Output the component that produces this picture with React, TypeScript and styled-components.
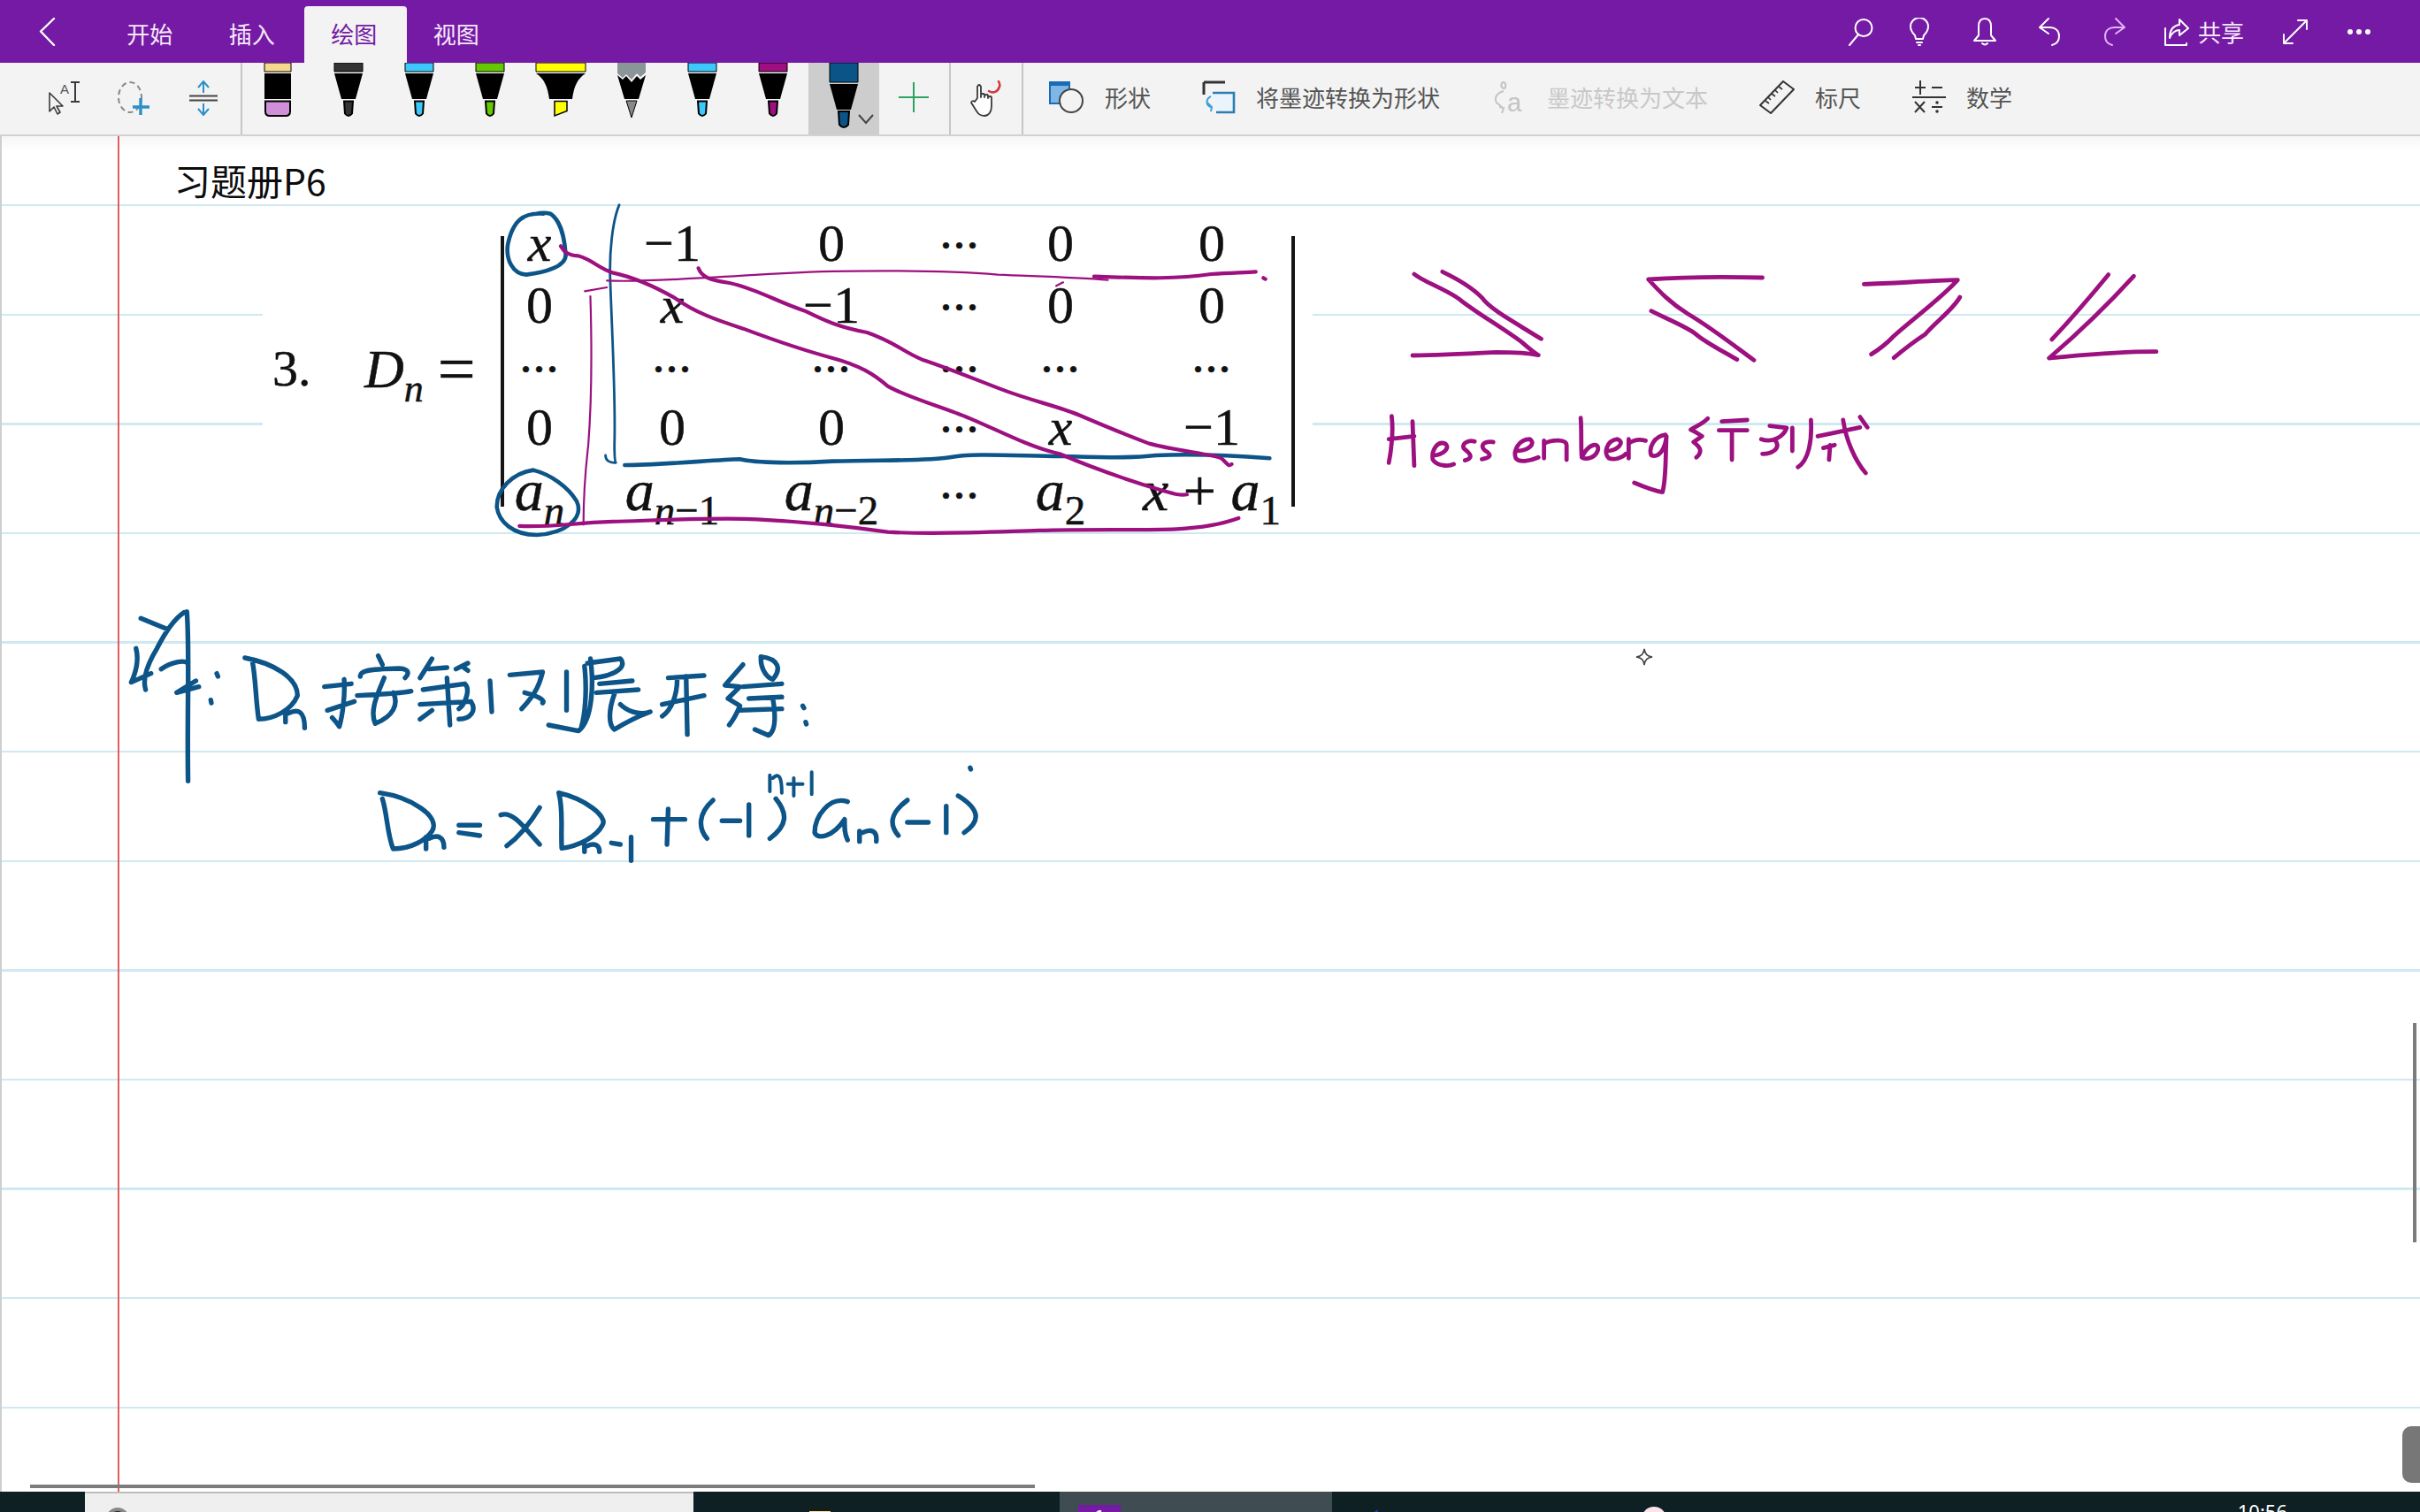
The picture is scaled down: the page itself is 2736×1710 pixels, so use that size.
import React from "react";
import styled, { createGlobalStyle } from "styled-components";

const Global = createGlobalStyle`
  html, body { margin: 0; padding: 0; height: 100%; overflow: hidden; background: #fff; }
  body { font-family: "Noto Sans CJK SC", "Noto Sans", sans-serif; }
`;

const Page = styled.div`
  width: 2736px; height: 1710px; display: flex; flex-direction: column; overflow: hidden;
`;

/* ---------- Title bar ---------- */
const TitleBar = styled.header`
  height: 71px; flex: none; background: #751aa5; display: flex; align-items: stretch; color: #fff;
`;
const BackButton = styled.div`
  width: 113px; display: flex; align-items: center; padding-left: 43px; box-sizing: border-box;
`;
const Tab = styled.div<{ $active?: boolean }>`
  width: 115.5px; margin-top: 7px; display: flex; align-items: center; justify-content: center;
  font-size: 26px; padding: 0 3px 4px 0; box-sizing: border-box; border-radius: 4px 4px 0 0;
  background: ${(p) => (p.$active ? "#f3f3f3" : "transparent")};
  color: ${(p) => (p.$active ? "#751aa5" : "#f4e9f9")};
`;
const TitleRight = styled.div`
  margin-left: auto; padding-right: 55px; display: flex; align-items: center;
`;
const TitleIcon = styled.div<{ $w: number }>`
  width: ${(p) => p.$w}px; height: 71px; display: flex; align-items: center; justify-content: center;
`;
const ShareButton = styled.div`
  width: 106px; display: flex; align-items: center; justify-content: flex-end; gap: 9px; font-size: 26px; color: #f4e9f9;
`;

/* ---------- Ribbon ---------- */
const Ribbon = styled.div`
  height: 81px; flex: none; background: #f3f3f3; border-bottom: 2px solid #d2d2d2; display: flex; align-items: stretch;
`;
const ToolGroup = styled.div`
  width: 274px; flex: none; box-sizing: border-box; border-right: 2px solid #c6c6c6;
  display: flex; align-items: center; padding: 0 0 2px 54px; gap: 40px;
`;
const PenRow = styled.div`
  display: flex; flex: none; width: 640px;
`;
const PenSlot = styled.div<{ $selected?: boolean }>`
  width: 80px; flex: none; position: relative; display: flex; justify-content: center;
  background: ${(p) => (p.$selected ? "#cdcdcd" : "transparent")};
`;
const PenChevron = styled.svg`
  position: absolute; left: 56px; top: 58px;
`;
const PlusSlot = styled.div`
  width: 81px; flex: none; box-sizing: border-box; border-right: 2px solid #c6c6c6; padding: 0 0 3px 22px;
  display: flex; align-items: center;
`;
const TouchSlot = styled.div`
  width: 82px; flex: none; box-sizing: border-box; border-right: 2px solid #c6c6c6;
  display: flex; align-items: center; justify-content: center;
`;
const RibbonActions = styled.div`
  display: flex; align-items: center; gap: 58px; padding: 0 0 4px 29px;
`;
const ActionButton = styled.div<{ $disabled?: boolean }>`
  display: flex; align-items: center; gap: 23px; font-size: 26px; white-space: nowrap;
  color: ${(p) => (p.$disabled ? "#c8c8c8" : "#555")};
`;

/* ---------- Canvas ---------- */
const Canvas = styled.main`
  flex: 1; position: relative; overflow: hidden; box-sizing: border-box; border-left: 2px solid #cfcfcf;
  background:
    linear-gradient(to bottom, rgba(0,0,0,.035), rgba(0,0,0,0) 18px),
    repeating-linear-gradient(to bottom, #fff -44.1px, #fff 77px, #cfe9f0 77px, #cfe9f0 79.5px);
`;
const MarginLine = styled.div`
  position: absolute; left: 131px; top: 0; bottom: 0; width: 2px; background: #df5f5c;
`;
const PageTitle = styled.div`
  position: absolute; left: 195px; top: 23px; font-size: 41px; line-height: 52px; color: #0c0c0c; white-space: nowrap;
`;
const Exercise = styled.section`
  position: absolute; left: 295px; top: 82px; width: 1187px; height: 364px; background: #fff;
  display: flex; align-items: flex-start; font-family: "Liberation Serif", serif; color: #111;
  -webkit-text-stroke: 0.5px #111;
`;
const ExerciseNumber = styled.div`
  width: 115px; flex: none; box-sizing: border-box; padding: 146px 0 0 11px; font-size: 58px; line-height: 70px;
`;
const Equation = styled.div`
  width: 154px; flex: none; padding-top: 146px; font-size: 62px; line-height: 70px; white-space: nowrap;
  em { font-style: italic; }
  sub { font-size: 44px; font-style: italic; line-height: 0; vertical-align: -16px; }
`;
const EqualSign = styled.span`
  margin-left: 16px; font-size: 76px; line-height: 60px; vertical-align: -5px;
`;
const Bar = styled.div`
  width: 4px; height: 306px; flex: none; margin-top: 31px; background: #151515;
`;
const MatrixGrid = styled.div`
  width: 932px; flex: none; margin: 4px -4px 0 -38px; display: grid;
  grid-template-columns: 156px 144px 216px 74px 154px 188px;
  grid-template-rows: 70px 70px 70px 66px 84px;
  align-items: center; justify-items: center;
`;
const Cell = styled.div`
  font-size: 60px; line-height: 60px; white-space: nowrap;
  em { font-style: italic; }
  sub { font-size: 44px; line-height: 0; vertical-align: -16px; }
  sub em { font-style: italic; }
`;
const BottomCell = styled(Cell)`
  font-size: 66px; line-height: 60px; margin-top: -6px;
  sub { font-size: 47px; vertical-align: -16px; }
`;
const Dots = styled.div`
  font-size: 42px; font-weight: 700; letter-spacing: 1px; line-height: 60px; white-space: nowrap; padding-top: 5px;
`;
const InkLayer = styled.svg`
  position: absolute; left: -2px; top: 0; pointer-events: none;
  path { fill: none; stroke-linecap: round; stroke-linejoin: round; vector-effect: non-scaling-stroke; }
`;
const HScroll = styled.div`
  position: absolute; left: 32px; bottom: 4px; width: 1136px; height: 4px; background: #7c7c7c;
`;
const VScroll = styled.div`
  position: absolute; right: 4px; top: 1003px; width: 4px; height: 248px; background: #7c7c7c;
`;
const SideHandle = styled.div`
  position: absolute; right: 0; bottom: 10px; width: 20px; height: 64px; background: #777;
  border-radius: 10px 0 0 10px;
`;
const Sparkle = styled.svg`
  position: absolute; left: 1846px; top: 578px;
`;

/* ---------- Taskbar ---------- */
const Taskbar = styled.footer`
  height: 23px; flex: none; background: #0e2024; display: flex; overflow: hidden; color: #fff;
`;
const TaskSlot = styled.div<{ $w: number; $pad?: number; $bg?: string }>`
  width: ${(p) => p.$w}px; flex: none; box-sizing: border-box; padding-left: ${(p) => p.$pad ?? 0}px;
  background: ${(p) => p.$bg ?? "transparent"};
`;
const SearchBox = styled(TaskSlot)`
  border-top: 2px solid #bdbdbd; padding-top: 16px;
`;
const SearchDot = styled.div`
  width: 26px; height: 26px; border-radius: 50%; background: #222; border: 4px solid #888; box-sizing: border-box;
`;
const FileIcon = styled.div`
  margin-top: 19px; width: 24px; height: 10px; background: linear-gradient(#1e1a10 0 3px, #efe7b0 3px);
`;
const NoteTile = styled.div`
  margin-top: 15px; width: 48px; height: 24px; background: #751aa5; font: 700 20px/26px "Liberation Sans", sans-serif;
  text-align: center;
`;
const EdgeIcon = styled.div`
  margin-top: 20px; width: 18px; height: 12px; background: #1c3f8f; clip-path: polygon(100% 0, 100% 100%, 0 100%);
`;
const BrowserIcon = styled.div`
  margin-top: 17px; width: 28px; height: 28px; border-radius: 50%; background: #fbe3e7;
`;
const Clock = styled.div`
  margin-left: auto; padding-right: 150px; font: 22px/28px "Noto Sans", sans-serif; margin-top: 8px; color: #fff;
`;

/* ---------- Icons ---------- */
type PenProps = { kind?: "pen" | "marker" | "highlighter" | "pencil" | "selected"; color: string; tip?: string };
const Pen = ({ kind = "pen", color, tip }: PenProps) => {
  const t = tip ?? color;
  if (kind === "marker")
    return (
      <svg width="50" height="81" viewBox="0 0 50 81">
        <path d="M10 0h30v10H10z" fill={color} stroke="#000" strokeWidth="1" />
        <path d="M10 12h30v29H10z" fill="#000" />
        <path d="M11 43.5h28V55q0 5-5 5H16q-5 0-5-5z" fill={t} stroke="#000" strokeWidth="2" />
      </svg>
    );
  if (kind === "highlighter")
    return (
      <svg width="70" height="81" viewBox="0 0 70 81">
        <path d="M7 0h56v10H7z" fill={color} stroke="#000" strokeWidth="1" />
        <path d="M7 12h56c-9 6-13 14-15 29H22C20 26 16 18 7 12z" fill="#000" />
        <path d="M28 43.5h14v11L28 60z" fill={color} stroke="#000" strokeWidth="1.5" />
      </svg>
    );
  if (kind === "pencil")
    return (
      <svg width="50" height="81" viewBox="0 0 50 81">
        <path d="M9 0h32v11l-6 5-4-4-6 7-6-6-4 4-6-5z" fill={color} />
        <path d="M9 14l6 5 4-4 6 7 6-7 4 4 6-5-8 27H17z" fill="#000" />
        <path d="M19 43h12l-6 19z" fill="#888" stroke="#000" strokeWidth="1" />
      </svg>
    );
  if (kind === "selected")
    return (
      <svg width="50" height="81" viewBox="0 0 50 81">
        <path d="M9 0h32v22H9z" fill={color} stroke="#000" strokeWidth="1" />
        <path d="M9 24h32l-8 29H17z" fill="#000" />
        <path d="M19 55h12l-1 15q-5 6-10 0z" fill={color} stroke="#000" strokeWidth="2" />
      </svg>
    );
  return (
    <svg width="50" height="81" viewBox="0 0 50 81">
      <path d="M9 0h32v10H9z" fill={color} stroke="#000" strokeWidth="1" />
      <path d="M9 12h32l-8 29H17z" fill="#000" />
      <path d="M20 43.5h10l-1 14q-4 5-8 0z" fill={t} stroke="#000" strokeWidth="2" />
    </svg>
  );
};

const W = { fill: "none", stroke: "#fff", strokeWidth: 2, strokeLinecap: "round" as const, strokeLinejoin: "round" as const };
const D = { fill: "none", stroke: "#3a3a3a", strokeWidth: 2, strokeLinejoin: "round" as const };

const BackIcon = () => (
  <svg width="20" height="32" viewBox="0 0 20 32"><path d="M18 1L3 15.5 18 31" {...W} strokeWidth={2.4} /></svg>
);
const SearchIcon = () => (
  <svg width="30" height="32" viewBox="0 0 30 32"><circle cx="18" cy="11.5" r="9.5" {...W} /><path d="M12 19L2 31" {...W} /></svg>
);
const BulbIcon = () => (
  <svg width="28" height="32" viewBox="0 0 28 32">
    <path d="M9 20C5 16 4 13 4 10a10 10 0 0 1 20 0c0 3-1 6-5 10l-1 4h-8z" {...W} />
    <path d="M11 28h6M13 31h2" {...W} />
  </svg>
);
const BellIcon = () => (
  <svg width="30" height="34" viewBox="0 0 30 34">
    <path d="M15 2c-5 0-7 4-7 9v10l-5 6h24l-5-6V11c0-5-2-9-7-9z" {...W} />
    <path d="M12 30q3 3 6 0" {...W} />
  </svg>
);
const UndoIcon = () => (
  <svg width="32" height="34" viewBox="0 0 32 34">
    <path d="M14 2L4 12l10 7M5 12h10c7 0 11 4 11 10s-4 9-8 10" {...W} />
  </svg>
);
const RedoIcon = () => (
  <svg width="32" height="34" viewBox="0 0 32 34">
    <path d="M18 2l10 10-10 7M27 12H17C10 12 6 16 6 22s4 9 8 10" {...W} stroke="#dfb4f5" />
  </svg>
);
const ShareIcon = () => (
  <svg width="30" height="34" viewBox="0 0 30 34">
    <path d="M2 13v19h24v-2" {...W} />
    <path d="M7 24C7 15 11 10 18 9V3l10 10-10 8v-6c-4 0-9 3-11 9z" {...W} />
  </svg>
);
const ExpandIcon = () => (
  <svg width="32" height="32" viewBox="0 0 32 32"><path d="M29 3L3 29M19 3h10v10M3 19v10h10" {...W} /></svg>
);
const MoreIcon = () => (
  <svg width="28" height="8" viewBox="0 0 28 8" fill="#fff"><circle cx="4" cy="4" r="3" /><circle cx="14" cy="4" r="3" /><circle cx="24" cy="4" r="3" /></svg>
);
const SelectTextIcon = () => (
  <svg width="38" height="38" viewBox="0 0 38 38">
    <path d="M2 13v21l5-5 4 8 3-2-4-7h7z" fill="#fff" {...D} strokeWidth={1.6} />
    <text x="14" y="14" fontSize="15" fill="#555" fontFamily="Liberation Sans, sans-serif">A</text>
    <path d="M26 1h10M31 1v22M26 23h10" {...D} />
  </svg>
);
const LassoIcon = () => (
  <svg width="40" height="40" viewBox="0 0 40 40">
    <ellipse cx="15" cy="19" rx="13" ry="17" fill="none" stroke="#888" strokeWidth="2" strokeDasharray="6 4" />
    <path d="M27 20v19M18 30h19" fill="none" stroke="#2b8fc9" strokeWidth="3.4" />
  </svg>
);
const SpaceIcon = () => (
  <svg width="36" height="40" viewBox="0 0 36 40">
    <path d="M18 14V2M12 8l6-7 6 7M18 26v12M12 32l6 7 6-7" fill="none" stroke="#2b8fc9" strokeWidth="2" />
    <path d="M2 17.5h32M2 22.5h32" fill="none" stroke="#444" strokeWidth="2" />
  </svg>
);
const PlusIcon = () => (
  <svg width="34" height="34" viewBox="0 0 34 34"><path d="M17 0v34M0 17h34" stroke="#2aa45e" strokeWidth="2" /></svg>
);
const TouchIcon = () => (
  <svg width="38" height="42" viewBox="0 0 38 42">
    <path d="M9 20V7q2-4 4 0v12l0-3q3-2 4 0v3-2q3-2 4 0v3-1q3-2 4 0v10c0 6-3 11-8 11s-7-2-10-7l-5-8q1-3 4-1z" {...D} fill="#fff" strokeWidth={1.8} />
    <path d="M22 12c5 3 10 1 12-5 1-2 0-4-1-6" fill="none" stroke="#d23b3b" strokeWidth="2.6" strokeLinecap="round" />
  </svg>
);
const ShapesIcon = () => (
  <svg width="40" height="36" viewBox="0 0 40 36">
    <path d="M1 1h22v24H1z" fill="#7eb6e8" stroke="#1b6bb5" strokeWidth="2" />
    <path d="M1 1h22v4H1z" fill="#1b6bb5" />
    <circle cx="25" cy="22" r="13" fill="#f3f3f3" stroke="#444" strokeWidth="2" />
  </svg>
);
const InkShapeIcon = () => (
  <svg width="38" height="38" viewBox="0 0 38 38">
    <path d="M2 2h24M2 2v14" fill="none" stroke="#333" strokeWidth="3" />
    <path d="M12 14h24v22H16" fill="#eaf5fb" stroke="#2a7fb0" strokeWidth="2.6" />
    <path d="M10 18c-6 3-6 10 0 12M5 24l6 6-1 5" fill="none" stroke="#3aa2dc" strokeWidth="2" />
  </svg>
);
const InkTextIcon = () => (
  <svg width="40" height="38" viewBox="0 0 40 38">
    <path d="M14 2c-3 0-4 6 0 7 3 0 3-6 0-7M14 12C6 14 3 20 6 25l6 5M9 30l5 1-2 6" fill="none" stroke="#c4c4c4" strokeWidth="2" />
    <text x="18" y="35" fontSize="29" fill="#c4c4c4" fontFamily="Liberation Sans, sans-serif">a</text>
  </svg>
);
const RulerIcon = () => (
  <svg width="40" height="38" viewBox="0 0 40 38">
    <path d="M27 1l12 9L13 37 1 28z" fill="none" stroke="#333" strokeWidth="2" strokeLinejoin="round" />
    <path d="M22 7l4 3M18 11l3 3M14 15l4 3M10 19l3 3M7 23l4 3" stroke="#333" strokeWidth="1.6" />
  </svg>
);
const MathIcon = () => (
  <svg width="38" height="40" viewBox="0 0 38 40">
    <path d="M0 20h38" stroke="#333" strokeWidth="2" />
    <path d="M9 1v16M3 9h12" stroke="#333" strokeWidth="2" />
    <path d="M22 9h12" stroke="#333" strokeWidth="2" />
    <path d="M3 25l11 12M14 25L3 37" stroke="#333" strokeWidth="2" />
    <path d="M22 31h12" stroke="#333" strokeWidth="2" />
    <circle cx="28" cy="26" r="1.8" fill="#333" /><circle cx="28" cy="36" r="1.8" fill="#333" />
  </svg>
);

/* ---------- Handwriting, in coordinates of the page ---------- */
const PURPLE = "#9c107f";
const BLUE = "#0d5588";

const matrixBlue = "M430 65C400 60 385 90 378 170C375 220 385 270 405 272C430 265 465 245 462 200C460 140 455 90 440 65C435 62 425 62 420 65 M548 918C600 918 680 900 715 898C740 912 800 912 850 905C920 900 990 905 1020 892C1050 878 1100 885 1180 888C1240 892 1280 895 1320 885C1370 880 1430 885 1485 895 M415 935C385 945 362 1000 362 1060C365 1110 385 1155 420 1155C460 1150 490 1100 478 1040C465 990 440 950 415 935";
const matrixBlueThin = "M540 35C530 90 525 200 527 300C530 500 535 700 533 850C533 880 533 905 535 910C525 912 520 900 520 885";
const matrixPurple = "M455 175C460 195 465 205 480 208C500 220 510 250 530 265C560 280 590 310 620 350C650 400 680 425 720 455C760 490 810 530 850 555C890 580 910 610 930 650C960 690 1010 720 1050 760C1100 810 1140 860 1180 880C1220 920 1280 970 1330 1005C1345 1015 1355 1022 1365 1018 M655 250C660 280 670 290 700 300C740 320 770 365 810 395C840 430 860 450 900 468C940 500 950 530 980 560C1020 590 1060 630 1100 665C1140 700 1180 720 1210 750C1240 780 1270 810 1310 845C1350 870 1400 880 1415 895C1425 915 1425 925 1430 915 M1230 278C1290 282 1340 290 1400 270C1430 265 1450 265 1465 262 M1476 283L1479 287 M395 1125C440 1130 470 1115 530 1110C600 1105 680 1095 740 1102C810 1110 870 1125 930 1145C1000 1155 1080 1145 1150 1140C1220 1135 1300 1140 1350 1135C1390 1130 1420 1115 1440 1098";
const matrixPurpleThin = "M522 292C570 298 640 285 700 278C760 270 810 260 880 260C950 258 1020 258 1090 272C1150 278 1200 280 1250 290 M490 328L522 315 M498 345C500 500 500 700 495 850C490 950 488 1050 488 1120 M1175 310L1185 298";

const sideInk = "M155 90C170 115 210 140 235 175C260 215 310 270 345 320C360 345 370 360 375 365C350 355 320 355 300 355C250 360 200 365 152 366 M205 82C230 105 260 140 275 170C290 210 330 250 380 310 M772 102C700 98 630 100 570 108C590 150 610 190 640 225C680 270 720 330 757 382 M575 215C600 240 640 270 655 295C670 320 700 350 727 380 M952 124C1000 122 1070 112 1118 110C1090 170 1040 240 1005 300C990 330 975 350 965 362 M1122 168C1110 210 1080 250 1060 295C1040 320 1020 350 1005 374 M1385 92C1360 150 1320 240 1285 312 M1430 97C1400 160 1350 260 1280 375C1340 365 1400 352 1470 353 M115 572C118 620 115 680 110 730 M110 650L155 640 M152 590L155 740 M188 705C205 705 220 680 210 665C195 655 185 690 188 720C195 740 215 745 225 735 M262 658C250 650 235 670 245 685C255 700 260 715 245 722 M295 660C280 655 270 670 280 688C290 700 295 712 275 718 M335 690C355 690 372 668 360 650C340 650 330 690 335 715C340 730 360 725 375 712 M385 655L385 715 M385 665C400 650 425 650 425 670L425 720 M450 578C452 620 450 680 452 712C465 660 485 660 480 690C475 715 460 720 452 712 M495 690C515 690 530 660 515 650C495 655 490 700 500 715C510 722 525 712 530 700 M535 650L535 715 M535 665C545 650 555 650 565 655 M600 635C580 640 570 680 575 705C590 715 600 680 602 640C600 700 602 780 595 830C580 825 560 810 545 798 M675 580C665 600 650 610 645 618C655 625 660 635 665 640L650 660C660 675 668 690 655 712 M700 590L745 585 M695 620L745 620 M718 620L718 720 M785 605L815 612C810 640 790 665 770 650 M795 655C805 680 790 700 772 700 M825 612L825 690 M858 585C860 650 855 720 835 745 M870 640L945 610 M880 680L900 670 M892 670L890 720 M915 585C920 650 935 720 955 765 M945 575L958 610";

const solutionInk = "M58 88L103 125 M130 68C110 95 95 150 85 190C70 240 60 290 66 330 M135 65C140 200 135 400 137 640 M50 190C55 230 50 270 42 305L75 275 M92 260C110 235 130 230 135 238 M150 300L118 340L155 320 M185 275L187 285 M175 365L176 375 M232 222C280 240 320 290 320 350C310 400 280 430 255 430C250 360 250 290 245 240 M300 400L300 440 M305 410C320 395 332 400 332 460 M365 320L410 310 M398 295C400 350 395 420 390 455C385 440 380 430 378 425 M370 400L415 370 M455 215L462 245 M425 285C425 270 430 260 490 258C510 260 505 280 500 290 M465 290C455 340 440 400 450 445 M420 350C470 345 500 340 510 335 M480 340C490 380 480 420 450 445 M545 225L525 290 M540 260L570 255 M605 240L585 260 M595 250L605 265 M530 330L600 310C610 330 600 380 590 395 M525 380L610 370C620 400 610 430 590 430 M570 290L575 450 M545 400L525 430 M642 300L645 405 M675 280L730 270C725 310 720 340 695 395 M700 340C720 350 735 365 730 375 M770 270L770 400 M810 225C815 300 815 430 790 470L740 450 M805 240L860 225C870 245 860 280 815 290 M800 250C805 340 800 420 795 455 M825 310L880 300 M820 340L890 330 M850 345C840 400 840 450 850 465C870 440 890 420 910 405C890 420 870 400 860 380 M940 290L1000 282 M930 380L1000 350 M955 295C955 350 945 400 930 420 M970 285L972 482 M1065 245L1035 315L1060 320L1040 360L1060 385C1055 410 1050 430 1042 450 M1095 218C1125 225 1130 260 1115 295C1105 290 1095 260 1095 225 M1065 320L1130 310 M1075 360L1130 355 M1060 400L1130 395 M1115 360C1120 420 1120 470 1108 485L1085 465 M1165 385L1167 392 M1170 440L1171 447 M458 680C510 695 560 760 545 810C535 840 510 870 480 870C470 820 470 750 462 700 M535 830L535 870 M540 835C555 820 565 830 565 865 M590 790L625 790 M590 815L625 825 M660 755C680 740 700 800 725 855 M725 730C710 780 690 830 670 860 M757 680C800 700 840 760 830 790C820 830 790 860 762 868C760 800 765 740 757 680 M800 855L800 880 M805 860C815 850 825 855 825 880 M845 850L860 855 M878 830L878 910 M915 770L968 770 M940 735L938 855 M1015 705C990 750 990 800 1005 835 M1030 775L1060 775 M1075 720L1075 825 M1120 700C1140 750 1140 790 1110 835 M1240 710C1210 690 1185 760 1185 815C1190 840 1215 830 1235 770C1235 800 1235 820 1240 840 M1260 810L1260 845 M1265 815C1280 800 1290 810 1288 845 M1340 705C1310 750 1310 790 1325 825 M1340 780L1375 780 M1405 725L1405 815 M1425 690C1465 740 1460 780 1435 815 M1445 595L1446 600";
const solutionInkThin = "M1110 620L1110 675 M1115 630C1125 610 1130 625 1130 680 M1140 650L1165 650 M1150 630L1150 690 M1180 610L1180 685";

const Ink = () => (
  <InkLayer width="2736" height="1533" viewBox="0 154 2736 1533">
    <g transform="translate(280 220) scale(0.778 0.3333)">
      <path d={matrixBlue} stroke={BLUE} strokeWidth={4.6} />
      <path d={matrixBlueThin} stroke={BLUE} strokeWidth={2.8} />
      <path d={matrixPurple} stroke={PURPLE} strokeWidth={4.2} />
      <path d={matrixPurpleThin} stroke={PURPLE} strokeWidth={2.2} />
    </g>
    <g transform="translate(1500 280) scale(0.638 0.3333)">
      <path d={sideInk} stroke={PURPLE} strokeWidth={4.8} />
    </g>
    <g transform="translate(120 670) scale(0.676 0.3333)">
      <path d={solutionInk} stroke={BLUE} strokeWidth={5.4} />
      <path d={solutionInkThin} stroke={BLUE} strokeWidth={4} />
    </g>
  </InkLayer>
);

const App = () => (
  <Page>
    <Global />
    <TitleBar>
      <BackButton><BackIcon /></BackButton>
      <Tab>开始</Tab>
      <Tab>插入</Tab>
      <Tab $active>绘图</Tab>
      <Tab>视图</Tab>
      <TitleRight>
        <TitleIcon $w={70}><SearchIcon /></TitleIcon>
        <TitleIcon $w={62}><BulbIcon /></TitleIcon>
        <TitleIcon $w={86}><BellIcon /></TitleIcon>
        <TitleIcon $w={62}><UndoIcon /></TitleIcon>
        <TitleIcon $w={82}><RedoIcon /></TitleIcon>
        <ShareButton><ShareIcon />共享</ShareButton>
        <TitleIcon $w={116}><ExpandIcon /></TitleIcon>
        <TitleIcon $w={28}><MoreIcon /></TitleIcon>
      </TitleRight>
    </TitleBar>

    <Ribbon>
      <ToolGroup>
        <SelectTextIcon />
        <LassoIcon />
        <SpaceIcon />
      </ToolGroup>
      <PenRow>
        <PenSlot><Pen kind="marker" color="#f5d98c" tip="#d08fd8" /></PenSlot>
        <PenSlot><Pen color="#333" /></PenSlot>
        <PenSlot><Pen color="#3cc8fb" /></PenSlot>
        <PenSlot><Pen color="#66c800" /></PenSlot>
        <PenSlot><Pen kind="highlighter" color="#ffff00" /></PenSlot>
        <PenSlot><Pen kind="pencil" color="#8a9599" /></PenSlot>
        <PenSlot><Pen color="#3cc8fb" /></PenSlot>
        <PenSlot><Pen color="#a00f80" /></PenSlot>
      </PenRow>
      <PenSlot $selected>
        <Pen kind="selected" color="#0b5488" />
        <PenChevron width="18" height="12" viewBox="0 0 18 12"><path d="M1 1l8 9 8-9" fill="none" stroke="#444" strokeWidth="2" /></PenChevron>
      </PenSlot>
      <PlusSlot><PlusIcon /></PlusSlot>
      <TouchSlot><TouchIcon /></TouchSlot>
      <RibbonActions>
        <ActionButton><ShapesIcon />形状</ActionButton>
        <ActionButton><InkShapeIcon />将墨迹转换为形状</ActionButton>
        <ActionButton $disabled><InkTextIcon />墨迹转换为文本</ActionButton>
        <ActionButton><RulerIcon />标尺</ActionButton>
        <ActionButton><MathIcon />数学</ActionButton>
      </RibbonActions>
    </Ribbon>

    <Canvas>
      <PageTitle>习题册P6</PageTitle>
      <Exercise>
        <ExerciseNumber>3.</ExerciseNumber>
        <Equation><em>D</em><sub>n</sub><EqualSign>=</EqualSign></Equation>
        <Bar />
        <MatrixGrid>
          <Cell><em>x</em></Cell><Cell>−1</Cell><Cell>0</Cell><Dots>···</Dots><Cell>0</Cell><Cell>0</Cell>
          <Cell>0</Cell><Cell><em>x</em></Cell><Cell>−1</Cell><Dots>···</Dots><Cell>0</Cell><Cell>0</Cell>
          <Dots>···</Dots><Dots>···</Dots><Dots>···</Dots><Dots>···</Dots><Dots>···</Dots><Dots>···</Dots>
          <Cell>0</Cell><Cell>0</Cell><Cell>0</Cell><Dots>···</Dots><Cell><em>x</em></Cell><Cell>−1</Cell>
          <BottomCell><em>a</em><sub><em>n</em></sub></BottomCell>
          <BottomCell><em>a</em><sub><em>n</em>−1</sub></BottomCell>
          <BottomCell><em>a</em><sub><em>n</em>−2</sub></BottomCell>
          <Dots>···</Dots>
          <BottomCell><em>a</em><sub>2</sub></BottomCell>
          <BottomCell><em>x</em> + <em>a</em><sub>1</sub></BottomCell>
        </MatrixGrid>
        <Bar />
      </Exercise>
      <MarginLine />
      <Ink />
      <Sparkle width="22" height="22" viewBox="0 0 22 22">
        <path d="M11 2c1 6 3 8 9 9-6 1-8 3-9 9-1-6-3-8-9-9 6-1 8-3 9-9z" fill="#fff" stroke="#444" strokeWidth="1.6" />
      </Sparkle>
      <HScroll />
      <VScroll />
      <SideHandle />
    </Canvas>

    <Taskbar>
      <TaskSlot $w={96} />
      <SearchBox $w={688} $pad={24} $bg="#efefef"><SearchDot /></SearchBox>
      <TaskSlot $w={414} $pad={131}><FileIcon /></TaskSlot>
      <TaskSlot $w={308} $pad={21} $bg="#3f4d52"><NoteTile>1</NoteTile></TaskSlot>
      <TaskSlot $w={350} $pad={34}><EdgeIcon /></TaskSlot>
      <TaskSlot $w={100} $pad={0}><BrowserIcon /></TaskSlot>
      <Clock>10:56</Clock>
    </Taskbar>
  </Page>
);

export default App;
